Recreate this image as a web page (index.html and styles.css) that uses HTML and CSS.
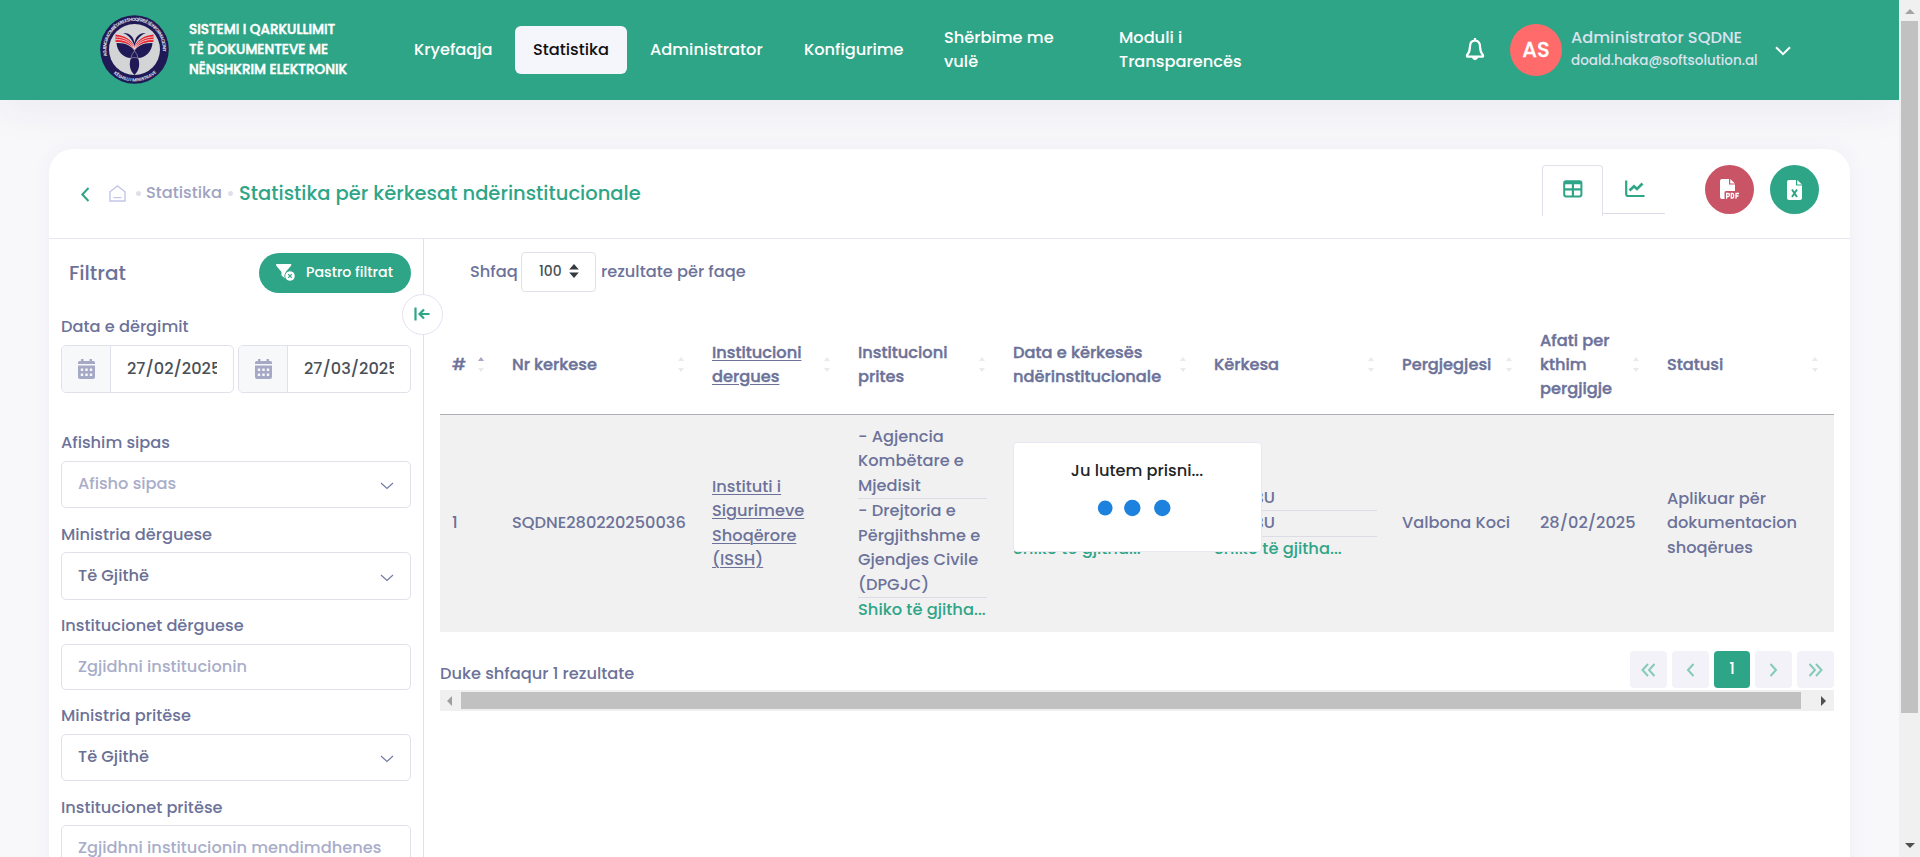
FILE: index.html
```html
<!DOCTYPE html>
<html lang="sq">
<head>
<meta charset="utf-8">
<title>Statistika për kërkesat ndërinstitucionale</title>
<link rel="stylesheet" href="styles.css">
</head>
<body>
<div class="page">
  <header class="topbar">
    <svg class="logo" width="69" height="69" viewBox="0 0 69 69">
      <defs>
        <path id="arc-top" d="M7.3 42 A28.3 28.3 0 1 1 61.7 42"/>
        <path id="arc-bottom" d="M10 55 A32 32 0 0 0 59 55"/>
      </defs>
      <circle cx="34.5" cy="34.5" r="34.3" fill="#1f1a56"/>
      <circle cx="34.5" cy="34.5" r="25.5" fill="#d3d4d6"/>
      <text class="logo-text" fill="#e4e4ee"><textPath href="#arc-top" startOffset="1" textLength="98">AGJENCIA KOMBËTARE E SHOQËRISË SË INFORMACIONIT</textPath></text>
      <text class="logo-text" fill="#e4e4ee"><textPath href="#arc-bottom" startOffset="5" textLength="47">KËSHILLI I MINISTRAVE</textPath></text>
      <path d="M15.500 19.500C24 20 32 25 34.500 32C37 25 45 20 53.500 19.500V27C46 26.500 38 29 34.500 34.500C31 29 23 26.500 15.500 27Z" fill="#e8242f"/>
      <path d="M15.500 22C24 22 32 26.500 34.500 33.500C37 26.500 45 22 53.500 22M15.500 24.600C24 24 31 28 34.500 34C38 28 45 24 53.500 24.600" fill="none" stroke="#e9d5d8" stroke-width=".9"/>
      <path d="M23 18C30 17.500 33.500 22 34.500 28C35.500 22 39 17.500 46 18C41 19.500 37 24 34.500 31C32 24 28 19.500 23 18Z" fill="#1f1a56"/>
      <path d="M16.500 28C25 27.500 32 31 34.500 36C37 31 44 27.500 52.500 28C52 36 46 43 38 43C40.500 49 39 56 34.500 60C30 56 28.500 49 31 43C23 43 17 36 16.500 28Z" fill="#1f1a56"/>
      <path d="M34.500 36Q31.500 39 31 43Q34.500 42 38 43Q37.500 39 34.500 36" fill="none" stroke="#aaa9c0" stroke-width=".6"/>
    </svg>
    <div class="brand"><span>SISTEMI I QARKULLIMIT</span><span>TË DOKUMENTEVE ME</span><span>NËNSHKRIM ELEKTRONIK</span></div>
    <nav class="nav">
      <a class="nav-item kry">Kryefaqja</a>
      <a class="nav-item active">Statistika</a>
      <a class="nav-item adm">Administrator</a>
      <a class="nav-item kon">Konfigurime</a>
      <a class="nav-item she">Shërbime me<br>vulë</a>
      <a class="nav-item mod">Moduli i<br>Transparencës</a>
    </nav>
    <div class="user">
      <svg class="bell" width="20" height="23" viewBox="0 0 20 23" fill="none" stroke="#fff" stroke-width="2.200" stroke-linejoin="round"><path d="M10 2.600C6.300 2.600 5 5.500 5 8.500C5 13 4 14.800 2 17.200V18.600H18V17.200C16 14.800 15 13 15 8.500C15 5.500 13.700 2.600 10 2.600Z"/><path d="M10 0V3" /><path d="M7.500 19.600C8 22.300 12 22.300 12.500 19.600Z" fill="#fff" stroke-width="1"/></svg>
      <div class="avatar">AS</div>
      <div class="who"><div class="who-name">Administrator SQDNE</div><div class="who-mail">doald.haka@softsolution.al</div></div>
      <svg class="user-caret" width="16" height="10" viewBox="0 0 16 10" fill="none" stroke="#fff" stroke-width="2"><path d="M1 1.200L8 8.200L15 1.200"/></svg>
    </div>
  </header>

  <main class="card">
    <div class="card-head">
      <svg class="back" width="10" height="15" viewBox="0 0 10 15" fill="none" stroke="#2fa587" stroke-width="2"><path d="M8.500 1L2.300 7.500L8.500 14"/></svg>
      <svg class="home" width="17" height="17" viewBox="0 0 17 17" fill="none" stroke="#c3c6e6" stroke-width="1.400"><path d="M1 16V6.800L8.500 1L16 6.800V16ZM4.500 12.600H12.500"/></svg>
      <i class="dot"></i><span class="crumb">Statistika</span><i class="dot"></i>
      <h1 class="title">Statistika për kërkesat ndërinstitucionale</h1>
      <div class="tabs">
        <div class="tab tab-on"><svg width="20" height="18" viewBox="0 0 20 18"><rect x="1.200" y="1.200" width="17.200" height="15.200" rx="1.800" fill="none" stroke="#2fa587" stroke-width="2"/><path d="M1 3.200H18.500M1.500 9.300H18.500M9.900 4V16" fill="none" stroke="#2fa587" stroke-width="2.200"/></svg></div>
        <div class="tab tab-off"><svg width="20" height="18" viewBox="0 0 20 18" fill="none" stroke="#2fa587" stroke-width="2.200"><path d="M1.200 .500V14Q1.200 16 3.200 16H19.500"/><path d="M4.500 10.500L9 6.200L12 9L17.500 3.500" stroke-width="2.600"/></svg></div>
      </div>
      <div class="export pdf"><svg width="20" height="22" viewBox="0 0 20 22"><path d="M2 0H9V5.500H15V12H6Q4.500 12 4.500 13.500V20H2Q0 20 0 18V2Q0 0 2 0ZM10.200 0L15 4.500H10.200Z" fill="#fff"/><path d="M6.600 19.700V14.500H8Q9.500 14.500 9.500 16T8 17.500H6.600M11.300 14.500V19H12.200Q13.700 19 13.700 16.700T12.200 14.500ZM16 19.700V14.500H19M16 17H18.500" fill="none" stroke="#fff" stroke-width="1.300"/></svg></div>
      <div class="export xls"><svg width="15" height="20" viewBox="0 0 15 20"><path d="M2 0H9V5.500H15V18Q15 20 13 20H2Q0 20 0 18V2Q0 0 2 0ZM10.200 0L15 4.500H10.200Z" fill="#fff"/><path d="M5 9.500L10 17M10 9.500L5 17" stroke="#2fa587" stroke-width="2"/></svg></div>
    </div>

    <div class="card-body">
      <aside class="side">
        <div class="side-head">
          <h2 class="side-title">Filtrat</h2>
          <button class="clear"><svg width="19" height="17" viewBox="0 0 19 17"><path d="M.500 0H15Q15.800 .800 15 1.800L9.700 8V15L5.500 11.500V8L.300 1.800Q-.200 .500 .500 0Z" fill="#fff"/><circle cx="14" cy="12" r="5.200" fill="#fff" stroke="#2fa587" stroke-width=".900"/><path d="M12.200 10.200L15.800 13.800M15.800 10.200L12.200 13.800" stroke="#2fa587" stroke-width="1.200"/></svg><span>Pastro filtrat</span></button>
        </div>
        <div class="label l1">Data e dërgimit</div>
        <div class="dates">
          <div class="date"><span class="addon"><svg width="17" height="20" viewBox="0 0 17 20"><path d="M3 0H5.500V2H11.500V0H14V2H15.500Q17 2 17 3.500V5H0V3.500Q0 2 1.500 2H3ZM0 6.500H17V18Q17 20 15 20H2Q0 20 0 18Z" fill="#a5a9c6"/><path d="M2.800 9.500H5.200V12H2.800ZM7.300 9.500H9.700V12H7.300ZM11.800 9.500H14.200V12H11.800ZM2.800 14.500H5.200V17H2.800ZM7.300 14.500H9.700V17H7.300ZM11.800 14.500H14.200V17H11.800Z" fill="#f7f8fa"/></svg></span><span class="date-text">27/02/2025</span></div>
          <div class="date"><span class="addon"><svg width="17" height="20" viewBox="0 0 17 20"><path d="M3 0H5.500V2H11.500V0H14V2H15.500Q17 2 17 3.500V5H0V3.500Q0 2 1.500 2H3ZM0 6.500H17V18Q17 20 15 20H2Q0 20 0 18Z" fill="#a5a9c6"/><path d="M2.800 9.500H5.200V12H2.800ZM7.300 9.500H9.700V12H7.300ZM11.800 9.500H14.200V12H11.800ZM2.800 14.500H5.200V17H2.800ZM7.300 14.500H9.700V17H7.300ZM11.800 14.500H14.200V17H11.800Z" fill="#f7f8fa"/></svg></span><span class="date-text">27/03/2025</span></div>
        </div>
        <div class="label l2">Afishim sipas</div>
        <div class="field"><span class="ph">Afisho sipas</span><svg class="caret" width="14" height="8" viewBox="0 0 14 8" fill="none" stroke="#7079a5" stroke-width="1.100"><path d="M1 1L7 6.500L13 1"/></svg></div>
        <div class="label l3">Ministria dërguese</div>
        <div class="field tall"><span class="val">Të Gjithë</span><svg class="caret" width="14" height="8" viewBox="0 0 14 8" fill="none" stroke="#7079a5" stroke-width="1.100"><path d="M1 1L7 6.500L13 1"/></svg></div>
        <div class="label l4">Institucionet dërguese</div>
        <div class="field short"><span class="ph">Zgjidhni institucionin</span></div>
        <div class="label l5">Ministria pritëse</div>
        <div class="field"><span class="val">Të Gjithë</span><svg class="caret" width="14" height="8" viewBox="0 0 14 8" fill="none" stroke="#7079a5" stroke-width="1.100"><path d="M1 1L7 6.500L13 1"/></svg></div>
        <div class="label l6">Institucionet pritëse</div>
        <div class="field"><span class="ph">Zgjidhni institucionin mendimdhenes</span></div>
        <div class="collapse"><svg width="16" height="14" viewBox="0 0 16 14" fill="none" stroke="#2fa587" stroke-width="2.200"><path d="M1.500 .500V13.500M15.500 7H6M10 2.500L5.500 7L10 11.500"/></svg></div>
      </aside>

      <section class="content">
        <div class="length"><span class="len-a">Shfaq</span><span class="len-box"><span class="len-num">100</span><svg width="10" height="14" viewBox="0 0 10 14" fill="#343a40"><path d="M5 0L9.800 5.500H.2ZM5 14L.2 8.500H9.800Z"/></svg></span><span class="len-b">rezultate për faqe</span></div>
        <table class="grid">
          <colgroup><col class="c1"><col class="c2"><col class="c3"><col class="c4"><col class="c5"><col class="c6"><col class="c7"><col class="c8"><col class="c9"></colgroup>
          <thead><tr>
            <th><div class="th"><span>#</span><i class="sort asc"></i></div></th>
            <th><div class="th"><span>Nr kerkese</span><i class="sort"></i></div></th>
            <th><div class="th"><u>Institucioni<br>dergues</u><i class="sort"></i></div></th>
            <th><div class="th"><span>Institucioni<br>prites</span><i class="sort"></i></div></th>
            <th><div class="th"><span>Data e kërkesës<br>ndërinstitucionale</span><i class="sort"></i></div></th>
            <th><div class="th"><span>Kërkesa</span><i class="sort"></i></div></th>
            <th><div class="th"><span>Pergjegjesi</span><i class="sort"></i></div></th>
            <th><div class="th"><span>Afati per<br>kthim<br>pergjigje</span><i class="sort"></i></div></th>
            <th><div class="th"><span>Statusi</span><i class="sort"></i></div></th>
          </tr></thead>
          <tbody><tr>
            <td>1</td>
            <td>SQDNE280220250036</td>
            <td><u>Instituti i<br>Sigurimeve<br>Shoqërore<br>(ISSH)</u></td>
            <td><div class="item">- Agjencia<br>Kombëtare e<br>Mjedisit</div><div class="item">- Drejtoria e<br>Përgjithshme e<br>Gjendjes Civile<br>(DPGJC)</div><a class="more">Shiko të gjitha...</a></td>
            <td><div class="item">28/02/2025</div><div class="item">28/02/2025</div><a class="more">Shiko të gjitha...</a></td>
            <td><div class="item req">ISSH BU</div><div class="item req">ISSH BU</div><a class="more">Shiko të gjitha...</a></td>
            <td>Valbona Koci</td>
            <td>28/02/2025</td>
            <td>Aplikuar për<br>dokumentacion<br>shoqërues</td>
          </tr></tbody>
        </table>
        <div class="foot">
          <span class="info">Duke shfaqur 1 rezultate</span>
          <div class="pager">
            <span class="pg"><svg width="15" height="14" viewBox="0 0 15 14"><path d="M7 1L1.500 7L7 13M13.500 1L8 7L13.500 13"/></svg></span>
            <span class="pg"><svg width="9" height="14" viewBox="0 0 9 14"><path d="M7.500 1L2 7L7.500 13"/></svg></span>
            <span class="pg on">1</span>
            <span class="pg"><svg width="9" height="14" viewBox="0 0 9 14"><path d="M1.500 1L7 7L1.500 13"/></svg></span>
            <span class="pg"><svg width="15" height="14" viewBox="0 0 15 14"><path d="M1.500 1L7 7L1.500 13M8 1L13.500 7L8 13"/></svg></span>
          </div>
        </div>
        <div class="hbar"><i class="arr left"></i><i class="hthumb"></i><i class="arr right"></i></div>
      </section>
    </div>
  </main>
</div>
<div class="vbar"><i class="arr up"></i><i class="vthumb"></i><i class="arr down"></i></div>
<div class="dialog">
  <div class="dialog-text">Ju lutem prisni...</div>
  <svg width="76" height="18" viewBox="0 0 76 18" fill="#1c82de"><circle cx="9.200" cy="9" r="7.400"/><circle cx="36.300" cy="9" r="8.200"/><circle cx="66.300" cy="9" r="8.200"/></svg>
</div>
</body>
</html>
```
FILE: styles.css
```css
*{box-sizing:border-box}
body{margin:0;width:1920px;height:857px;overflow:hidden;display:flex;position:relative;background:#f8f8fb;font-family:Poppins,Inter,sans-serif;font-size:16.220px;font-weight:500;color:#6c7299}
h1,h2{margin:0;font-weight:500}
svg{display:block;flex:none}
i{font-style:normal;flex:none}
u{text-underline-offset:2px;text-decoration-thickness:1px}
.page{width:1899px;height:857px;overflow:hidden}

.topbar{position:relative;height:100px;background:#2fa587;display:flex;align-items:center;padding-left:100px;box-shadow:0 0 50px rgba(60,30,80,.09)}
.logo{margin-top:-1px}
.logo-text{font-size:4.500px;font-weight:600}
.brand{display:flex;flex-direction:column;margin-left:20px;width:186px;color:#fff;font-size:13.550px;-webkit-text-stroke:.5px #fff;line-height:20px;white-space:nowrap}
.nav{display:flex;align-items:center;margin-left:23px;color:#fff;line-height:24px;white-space:nowrap}
.nav-item{padding:0 16px}
.kry{width:117px}
.active{background:#f5f5fc;color:#111;border-radius:6px;height:48px;line-height:48px;width:112px;padding:0 0 0 18px}
.adm{width:154px;padding-left:23px}
.kon{width:140px;padding-left:23px}
.she{width:175px;padding-left:23px}
.mod{padding-left:23px}
.user{margin-left:auto;display:flex;align-items:center;padding-right:108px}
.bell{margin:-2px 25px 0 0}
.avatar{width:52px;height:52px;border-radius:50%;background:#ff6b6b;color:#fff;font-size:21.100px;-webkit-text-stroke:.3px #fff;display:flex;align-items:center;justify-content:center;margin-top:-1px}
.who{margin:-3px 0 0 9px;width:204px;color:#d9e3ee;white-space:nowrap}
.who-name{line-height:24px}
.who-mail{font-size:13.500px;line-height:21px}
.user-caret{margin-top:2px}

.card{width:1801px;margin:49px 0 0 49px;height:760px;background:#fff;border-radius:24px 24px 0 0;box-shadow:0 0 20px rgba(76,60,120,.05)}
.card-head{height:90px;border-bottom:1px solid #e7e7ef;display:flex;align-items:center;padding:0 31px;position:relative}
.back{margin-top:1px}
.home{margin-left:19px;margin-top:-1px}
.dot{width:5px;height:5px;border-radius:50%;background:#dfe0ec;margin:-1px 0 0 10px}
.crumb{width:76px;margin-left:5px;color:#a0a3c0;margin-top:-3px}
.crumb + .dot{margin-left:6px}
.title{margin-left:6px;font-size:19.500px;color:#2fa587;margin-top:-1px;white-space:nowrap}
.tabs{margin-left:auto;display:flex;align-self:flex-start;margin-top:16px;width:123px}
.tab-on{width:61px;height:51px;border:1px solid #e0dfea;border-bottom:0;border-radius:4px 4px 0 0;padding:14px 0 0 20px}
.tab-off{width:62px;height:49px;border-bottom:1px solid #dddce8;padding:15px 0 0 22px}
.export{width:49px;height:49px;border-radius:50%;display:flex;align-items:center;justify-content:center;align-self:flex-start;margin-top:16px}
.pdf{background:#c95466;margin-left:40px}
.xls{background:#2fa587;margin-left:16px}

.card-body{display:flex}
.side{position:relative;width:375px;height:700px;border-right:1px solid #e0dfee;padding:14px 12px 0}
.side-head{display:flex;justify-content:space-between;align-items:center;height:40px;padding-left:8px}
.side-title{font-size:20px}
.clear{width:152px;height:40px;border:0;border-radius:20px;background:#2fa587;color:#fff;font:500 14.200px Poppins,Inter,sans-serif;display:flex;align-items:center;padding:0 0 1px 17px;gap:11px;white-space:nowrap}
.label{height:24px;line-height:26px;white-space:nowrap}
.l1{margin:21px 0 7px}
.l2{margin:37px 0 7px}
.l3{margin:14px 0 6px}
.l4{margin:13px 0 7px}
.l5{margin:13px 0 7px}
.l6{margin:14px 0 6px}
.dates{display:flex;gap:4px}
.date{width:173px;height:48px;border:1px solid #e1e1ec;border-radius:5px;display:flex;overflow:hidden}
.addon{width:49px;background:#f7f8fa;border-right:1px solid #e1e1ec;display:flex;align-items:center;padding-left:16px}
.date-text{width:90px;margin-left:16px;overflow:hidden;line-height:46px;color:#495057;font-size:16.220px}
.field{width:350px;height:47px;border:1px solid #e1e1ec;border-radius:5px;display:flex;align-items:center;justify-content:space-between;padding:0 16px 2px;white-space:nowrap}
.tall{height:48px}
.short{height:46px}
.ph{color:#a9adc9}
.val{color:#6a6f93}
.caret{margin-top:5px}
.collapse{position:absolute;left:353px;top:55px;width:41px;height:41px;border:1px solid #e3e2f2;border-radius:50%;background:#fff;display:flex;align-items:center;justify-content:center;padding:0 2px 2px 0}

.content{width:1394px;margin-left:16px}
.length{display:flex;align-items:center;padding:13px 0 0 30px;height:53px;white-space:nowrap}
.len-a{width:51px;margin-top:-1px}
.len-b{margin:-1px 0 0 5px}
.len-box{width:75px;height:40px;border:1px solid #e1e1ec;border-radius:4px;display:flex;align-items:center;padding-left:17px;padding-bottom:2px;gap:8px;color:#495057;font-size:13.900px}
.len-num{width:22px}
.grid{table-layout:fixed;border-collapse:separate;border-spacing:0;width:1394px;margin-top:25px;line-height:24.500px}
.c1{width:60px}.c2{width:200px}.c3{width:146px}.c4{width:155px}.c5{width:201px}.c6{width:188px}.c7{width:138px}.c8{width:127px}.c9{width:179px}
th{height:98px;padding:0 0 2px 12px;border-bottom:1px solid #aeafb4;text-align:left;font-weight:500;-webkit-text-stroke:.4px #6c7299;line-height:24px;white-space:nowrap;vertical-align:middle}
.th{display:flex;justify-content:space-between;align-items:center;padding-right:16px}
.sort{width:6px;height:15px;display:flex;flex-direction:column;justify-content:space-between}
.sort::before{content:"";border:3px solid transparent;border-top:0;border-bottom:4px solid #e9e9ef}
.sort::after{content:"";border:3px solid transparent;border-bottom:0;border-top:4px solid #e9e9ef}
.asc::before{border-bottom-color:#a4a7c1}
td{height:217px;background:#f1f1f1;padding:0 14px 0 12px;vertical-align:middle;white-space:nowrap}
.item{border-bottom:1px solid #dcdce6}
td .req{width:163px}
.more{display:block;color:#2fa587;font-size:16.300px}
.foot{display:flex;justify-content:space-between;margin-top:19px;height:37px}
.info{line-height:24px;margin-top:11px}
.pager{display:flex;gap:5px}
.pg{width:36.800px;height:37px;border-radius:4px;background:#f3f2f8;display:flex;align-items:center;justify-content:center}
.pg svg{fill:none;stroke:#84cbb9;stroke-width:2}
.on{background:#2fa587;color:#fff;padding-bottom:2px}
.hbar{margin-top:2px;height:21px;background:#f0f0f0;display:flex;align-items:center}
.hthumb{width:1340px;height:17px;background:#c1c1c1}
.arr{width:0;height:0}
.left{border:5px solid transparent;border-left:0;border-right:5px solid #9f9f9f;margin:0 9px 0 7px}
.right{border:5px solid transparent;border-right:0;border-left:5px solid #505050;margin-left:20px}

.vbar{width:21px;height:857px;background:#f0f0f0;display:flex;flex-direction:column;align-items:center}
.vthumb{width:17px;height:692px;background:#c1c1c1;margin-top:7px}
.up{border:5px solid transparent;border-top:0;border-bottom:5px solid #a3a3a3;margin-top:9px}
.down{border:5px solid transparent;border-bottom:0;border-top:5px solid #505050;margin-top:130px}

.dialog{position:absolute;left:1012.500px;top:442px;width:249px;height:110px;background:#fff;border:1px solid #e8e7f3;border-radius:4px;display:flex;flex-direction:column;align-items:center;padding:15px 0 0 0}
.dialog-text{color:#212529;line-height:26px}
.dialog svg{margin:15px 6px 0 0}
```
